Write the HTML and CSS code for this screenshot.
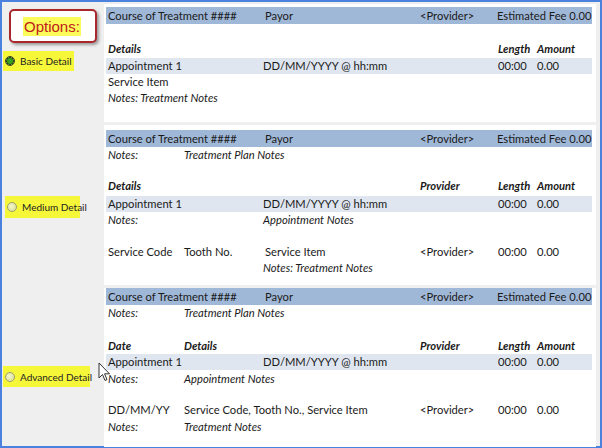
FILE: index.html
```html
<!DOCTYPE html>
<html>
<head>
<meta charset="utf-8">
<link rel="stylesheet" href="styles.css">
</head>
<body>
<div class="frame">
  <div class="layout">
    <div class="side side-1">
      <div class="options-box"><span class="options-text">Options:</span></div>
      <div class="opt opt-basic"><span class="radio radio-on"></span><span class="opt-label">Basic Detail</span></div>
    </div>
    <div class="panel panel-1">
      <div class="grid">
        <div class="row head"><span class="c12">Course of Treatment ####</span><span class="c3 payor">Payor</span><span class="c4">&lt;Provider&gt;</span><span class="c56">Estimated Fee 0.00</span></div>
        <div class="row bi sp17"><span class="c12">Details</span><span class="c5">Length</span><span class="c6">Amount</span></div>
        <div class="row appt g1"><span class="c12">Appointment 1</span><span class="c3">DD/MM/YYYY @ hh:mm</span><span class="c5">00:00</span><span class="c6">0.00</span></div>
        <div class="row"><span class="c12">Service Item</span></div>
        <div class="row it"><span class="c123">Notes: Treatment Notes</span></div>
      </div>
    </div>

    <div class="side side-2">
      <div class="opt opt-medium"><span class="radio"></span><span class="opt-label">Medium Detail</span></div>
    </div>
    <div class="panel panel-2">
      <div class="grid">
        <div class="row head"><span class="c12">Course of Treatment ####</span><span class="c3 payor">Payor</span><span class="c4">&lt;Provider&gt;</span><span class="c56">Estimated Fee 0.00</span></div>
        <div class="row it"><span class="c1">Notes:</span><span class="c23">Treatment Plan Notes</span></div>
        <div class="row bi sp15"><span class="c12">Details</span><span class="c4">Provider</span><span class="c5">Length</span><span class="c6">Amount</span></div>
        <div class="row appt g2"><span class="c12">Appointment 1</span><span class="c3">DD/MM/YYYY @ hh:mm</span><span class="c5">00:00</span><span class="c6">0.00</span></div>
        <div class="row it"><span class="c12">Notes:</span><span class="c3">Appointment Notes</span></div>
        <div class="row sp16"><span class="c1">Service Code</span><span class="c2">Tooth No.</span><span class="c3 payor">Service Item</span><span class="c4">&lt;Provider&gt;</span><span class="c5">00:00</span><span class="c6">0.00</span></div>
        <div class="row it"><span class="c3">Notes: Treatment Notes</span></div>
      </div>
    </div>

    <div class="side side-3">
      <div class="opt opt-adv"><span class="radio"></span><span class="opt-label">Advanced Detail</span></div>
    </div>
    <div class="panel panel-3">
      <div class="grid">
        <div class="row head"><span class="c12">Course of Treatment ####</span><span class="c3 payor">Payor</span><span class="c4">&lt;Provider&gt;</span><span class="c56">Estimated Fee 0.00</span></div>
        <div class="row it"><span class="c1">Notes:</span><span class="c23">Treatment Plan Notes</span></div>
        <div class="row bi sp17"><span class="c1">Date</span><span class="c2">Details</span><span class="c4">Provider</span><span class="c5">Length</span><span class="c6">Amount</span></div>
        <div class="row appt"><span class="c12">Appointment 1</span><span class="c3">DD/MM/YYYY @ hh:mm</span><span class="c5">00:00</span><span class="c6">0.00</span></div>
        <div class="row it g1"><span class="c1">Notes:</span><span class="c23">Appointment Notes</span></div>
        <div class="row sp15"><span class="c1">DD/MM/YY</span><span class="c23">Service Code, Tooth No., Service Item</span><span class="c4">&lt;Provider&gt;</span><span class="c5">00:00</span><span class="c6">0.00</span></div>
        <div class="row it g1"><span class="c1">Notes:</span><span class="c23">Treatment Notes</span></div>
      </div>
    </div>
  </div>
  <svg class="cursor" width="13" height="21" viewBox="0 0 13 21">
    <path d="M1 1 L1 16 L4.5 12.5 L7 18.5 L9 17.6 L6.6 11.8 L11.5 11.8 Z" fill="#fff" stroke="#333" stroke-width="1" stroke-linejoin="round"/>
  </svg>
</div>
</body>
</html>
```

FILE: styles.css
```css
* { box-sizing: border-box; }
html, body { margin: 0; padding: 0; }
body {
  width: 602px;
  height: 448px;
  overflow: hidden;
  font-family: Lato, "Open Sans", sans-serif;
  font-size: 11.2px;
  color: #1a1a1a;
}
.frame {
  position: relative;
  width: 602px;
  height: 448px;
  border: 2px solid #4a82de;
  background: #efefef;
  padding: 2px 4px 0 0;
}
.layout {
  display: grid;
  grid-template-columns: 102px 492px;
  grid-template-rows: 118px 160px 159px;
  row-gap: 3px;
}
.side { display: flex; flex-direction: column; }
.panel { background: #fff; padding: 5px 4px 0 2px; }
.panel-1 { padding-top: 3px; }
.panel-3 { padding-top: 0; }

.grid { display: flex; flex-direction: column; }
.row {
  display: grid;
  grid-template-columns: 76px 79px 157px 78px 39px 57px;
  height: 16px;
  line-height: 16px;
  padding-left: 2px;
  white-space: nowrap;
}
.head { background: #a0b8d8; height: 17px; line-height: 17px; }
.appt { background: #dfe6f0; }
.bi { font-weight: bold; font-style: italic; }
.it { font-style: italic; }
.sp15 { margin-top: 15px; }
.sp16 { margin-top: 16px; }
.sp17 { margin-top: 17px; }
.g1 { margin-top: 1px; }
.g2 { margin-top: 2px; }

.c1 { grid-column: 1; }
.c2 { grid-column: 2; }
.c3 { grid-column: 3; }
.c4 { grid-column: 4; }
.c5 { grid-column: 5; }
.c6 { grid-column: 6; }
.c12 { grid-column: 1 / 3; }
.c23 { grid-column: 2 / 4; }
.c123 { grid-column: 1 / 4; }
.c56 { grid-column: 5 / 7; margin-left: -1px; }
.payor { padding-left: 2px; }

.options-box {
  margin: 5px 0 0 7px;
  width: 88px;
  height: 34px;
  border: 2px solid #a8282c;
  border-radius: 5px;
  background: #fff;
  box-shadow: 2px 2px 3px rgba(0,0,0,0.35);
  display: flex;
  align-items: center;
  padding-left: 12px;
}
.options-text {
  background: #fbfb5a;
  color: #c0201c;
  font-family: "Liberation Sans", Arial, sans-serif;
  font-size: 15px;
  line-height: 19px;
  padding: 0 1px;
}
.opt {
  display: flex;
  align-items: center;
  background: #f7f73a;
  height: 20px;
  padding-left: 2px;
  gap: 5px;
  white-space: nowrap;
}
.opt-label {
  font-family: Lato, sans-serif;
  font-size: 10px;
  color: #222;
}
.opt-basic { margin: 8px 0 0 1px; width: 71px; }
.opt-medium { margin: 71px 0 0 3px; width: 75px; height: 22px; }
.opt-adv { margin: 78px 0 0 1px; width: 87px; height: 21px; }
.radio {
  width: 10px;
  height: 10px;
  border-radius: 50%;
  border: 1px solid #9aa070;
  background: radial-gradient(circle at 40% 40%, #f4f6c8, #d7dc90);
  flex: none;
}
.radio-on {
  border: 1px solid #354020;
  background: radial-gradient(circle, #3aa020 0 2.5px, #1e4010 3.5px, #c8d080 4px);
}
.cursor {
  position: absolute;
  left: 96px;
  top: 360px;
}
```
